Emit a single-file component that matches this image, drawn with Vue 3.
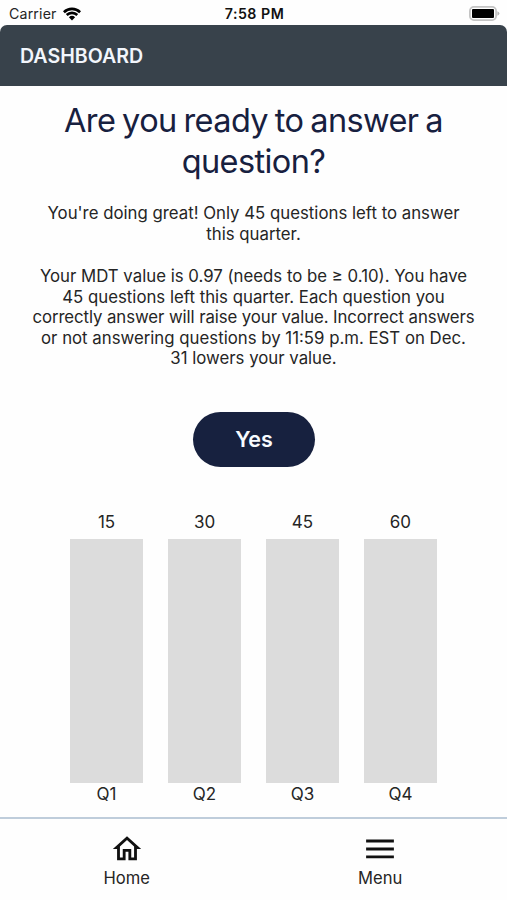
<script setup>
const quarters = [
  { count: 15, label: 'Q1' },
  { count: 30, label: 'Q2' },
  { count: 45, label: 'Q3' },
  { count: 60, label: 'Q4' },
]
const progressLines = ["You're doing great! Only 45 questions left to answer", 'this quarter.']
const valueLines = [
  'Your MDT value is 0.97 (needs to be ≥ 0.10). You have',
  '45 questions left this quarter. Each question you',
  'correctly answer will raise your value. Incorrect answers',
  'or not answering questions by 11:59 p.m. EST on Dec.',
  '31 lowers your value.',
]
</script>

<template>
  <div class="screen">
    <div class="status">
      <div class="carrier">
        <span>Carrier</span>
        <svg class="wifi" width="18" height="14" viewBox="0 0 18 14">
          <path d="M0.9 5.2A11.6 11.6 0 0 1 17.1 5.2" />
          <path d="M3.7 8A7.6 7.6 0 0 1 14.3 8" />
          <path class="dot" d="M9 13.4L5.9 10.3A4.5 4.5 0 0 1 12.1 10.3Z" />
        </svg>
      </div>
      <div class="time">7:58 PM</div>
      <div class="power">
        <svg width="31" height="15" viewBox="0 0 31 15">
          <rect x="0.9" y="0.9" width="26.2" height="13.2" rx="4" fill="#fff" stroke="#c4c4c4" stroke-width="1.8" />
          <rect x="3" y="2.9" width="22" height="9.2" rx="1" fill="#000" />
          <path d="M28.4 5.3Q30.4 6 30.4 7.5T28.4 9.7Z" fill="#b5b5b5" />
        </svg>
      </div>
    </div>
    <header class="bar"><span>DASHBOARD</span></header>
    <main class="content">
      <h1>Are you ready to answer a<br />question?</h1>
      <p class="progress"><span v-for="line in progressLines" :key="line">{{ line }}</span></p>
      <p class="value"><span v-for="line in valueLines" :key="line">{{ line }}</span></p>
      <button class="yes">Yes</button>
      <div class="chart">
        <div v-for="q in quarters" :key="q.label" class="quarter">
          <div class="count">{{ q.count }}</div>
          <div class="column"></div>
          <div class="label">{{ q.label }}</div>
        </div>
      </div>
    </main>
    <nav class="tabs">
      <div class="tab">
        <svg width="34" height="34" viewBox="0 0 24 24">
          <path d="M12 5.69l5 4.5V18h-2v-6H9v6H7v-7.81l5-4.5M12 3L2 12h3v8h6v-6h2v6h6v-8h3L12 3z" />
        </svg>
        <span>Home</span>
      </div>
      <div class="tab">
        <svg width="34" height="34" viewBox="0 0 24 24">
          <path d="M2.2 5.3h19.6v2.1H2.2zM2.2 10.9h19.6v2.1H2.2zM2.2 16.5h19.6v2.1H2.2z" />
        </svg>
        <span>Menu</span>
      </div>
    </nav>
  </div>
</template>

<style>
body {
  background: #fefefe;
}
</style>

<style scoped>
.screen {
  width: 507px;
  height: 900px;
  display: flex;
  flex-direction: column;
  overflow: hidden;
  background: #fefefe;
  font-family: Inter, "Liberation Sans", sans-serif;
  color: #252525;
}
.status {
  height: 25px;
  flex: none;
  display: grid;
  grid-template-columns: 1fr auto 1fr;
  align-items: center;
  padding: 2px 7px 0 9px;
  box-sizing: border-box;
  font-size: 14.2px;
  line-height: 20px;
}
.carrier {
  display: flex;
  align-items: center;
  gap: 6px;
  letter-spacing: 0.15px;
}
.wifi {
  fill: none;
  stroke: #000;
  stroke-width: 2.6;
}
.wifi .dot {
  fill: #000;
  stroke: none;
}
.time {
  font-weight: 600;
  letter-spacing: 0.5px;
  color: #111;
}
.power {
  display: flex;
  justify-content: flex-end;
}
.bar {
  height: 61px;
  flex: none;
  display: flex;
  align-items: center;
  padding-left: 20px;
  background: #38424b;
  border-radius: 7px 7px 0 0;
  color: #f2f6fc;
  font-size: 19.6px;
  font-weight: 600;
}
.content {
  height: 731px;
  flex: none;
  display: flex;
  flex-direction: column;
  align-items: center;
  text-align: center;
}
h1 {
  margin: 14px 0 0;
  font-size: 32.5px;
  line-height: 41px;
  font-weight: 400;
  letter-spacing: -0.6px;
  word-spacing: -1.7px;
  color: #17203f;
}
p {
  margin: 0;
  font-size: 16.8px;
  line-height: 20.5px;
}
p span {
  display: block;
  white-space: nowrap;
}
.progress {
  margin-top: 21px;
}
.value {
  margin-top: 22px;
}
.value span:nth-child(3) {
  letter-spacing: -0.08px;
}
.yes {
  margin: 43.5px 0 0 1px;
  width: 122px;
  height: 55px;
  flex: none;
  padding: 0 0 1px;
  border: 0;
  border-radius: 28px;
  background: #17213f;
  color: #f8fbff;
  font-family: inherit;
  font-size: 21.5px;
  font-weight: 600;
}
.chart {
  margin: 44.5px 0 0;
  display: flex;
  gap: 24.3px;
  font-size: 17px;
  line-height: 21px;
}
.quarter {
  width: 73.7px;
}
.column {
  height: 244px;
  margin-top: 6.4px;
  background: #dcdcdc;
}
.label {
  margin-top: 1.1px;
}
.tabs {
  flex: 1;
  display: grid;
  grid-template-columns: 1fr 1fr;
  border-top: 2px solid #bfcddb;
}
.tab {
  display: flex;
  flex-direction: column;
  align-items: center;
  padding-top: 12.5px;
  font-size: 16.6px;
  line-height: 21px;
}
.tab svg {
  fill: #111;
}
.tab span {
  margin-top: 2.5px;
}
</style>
